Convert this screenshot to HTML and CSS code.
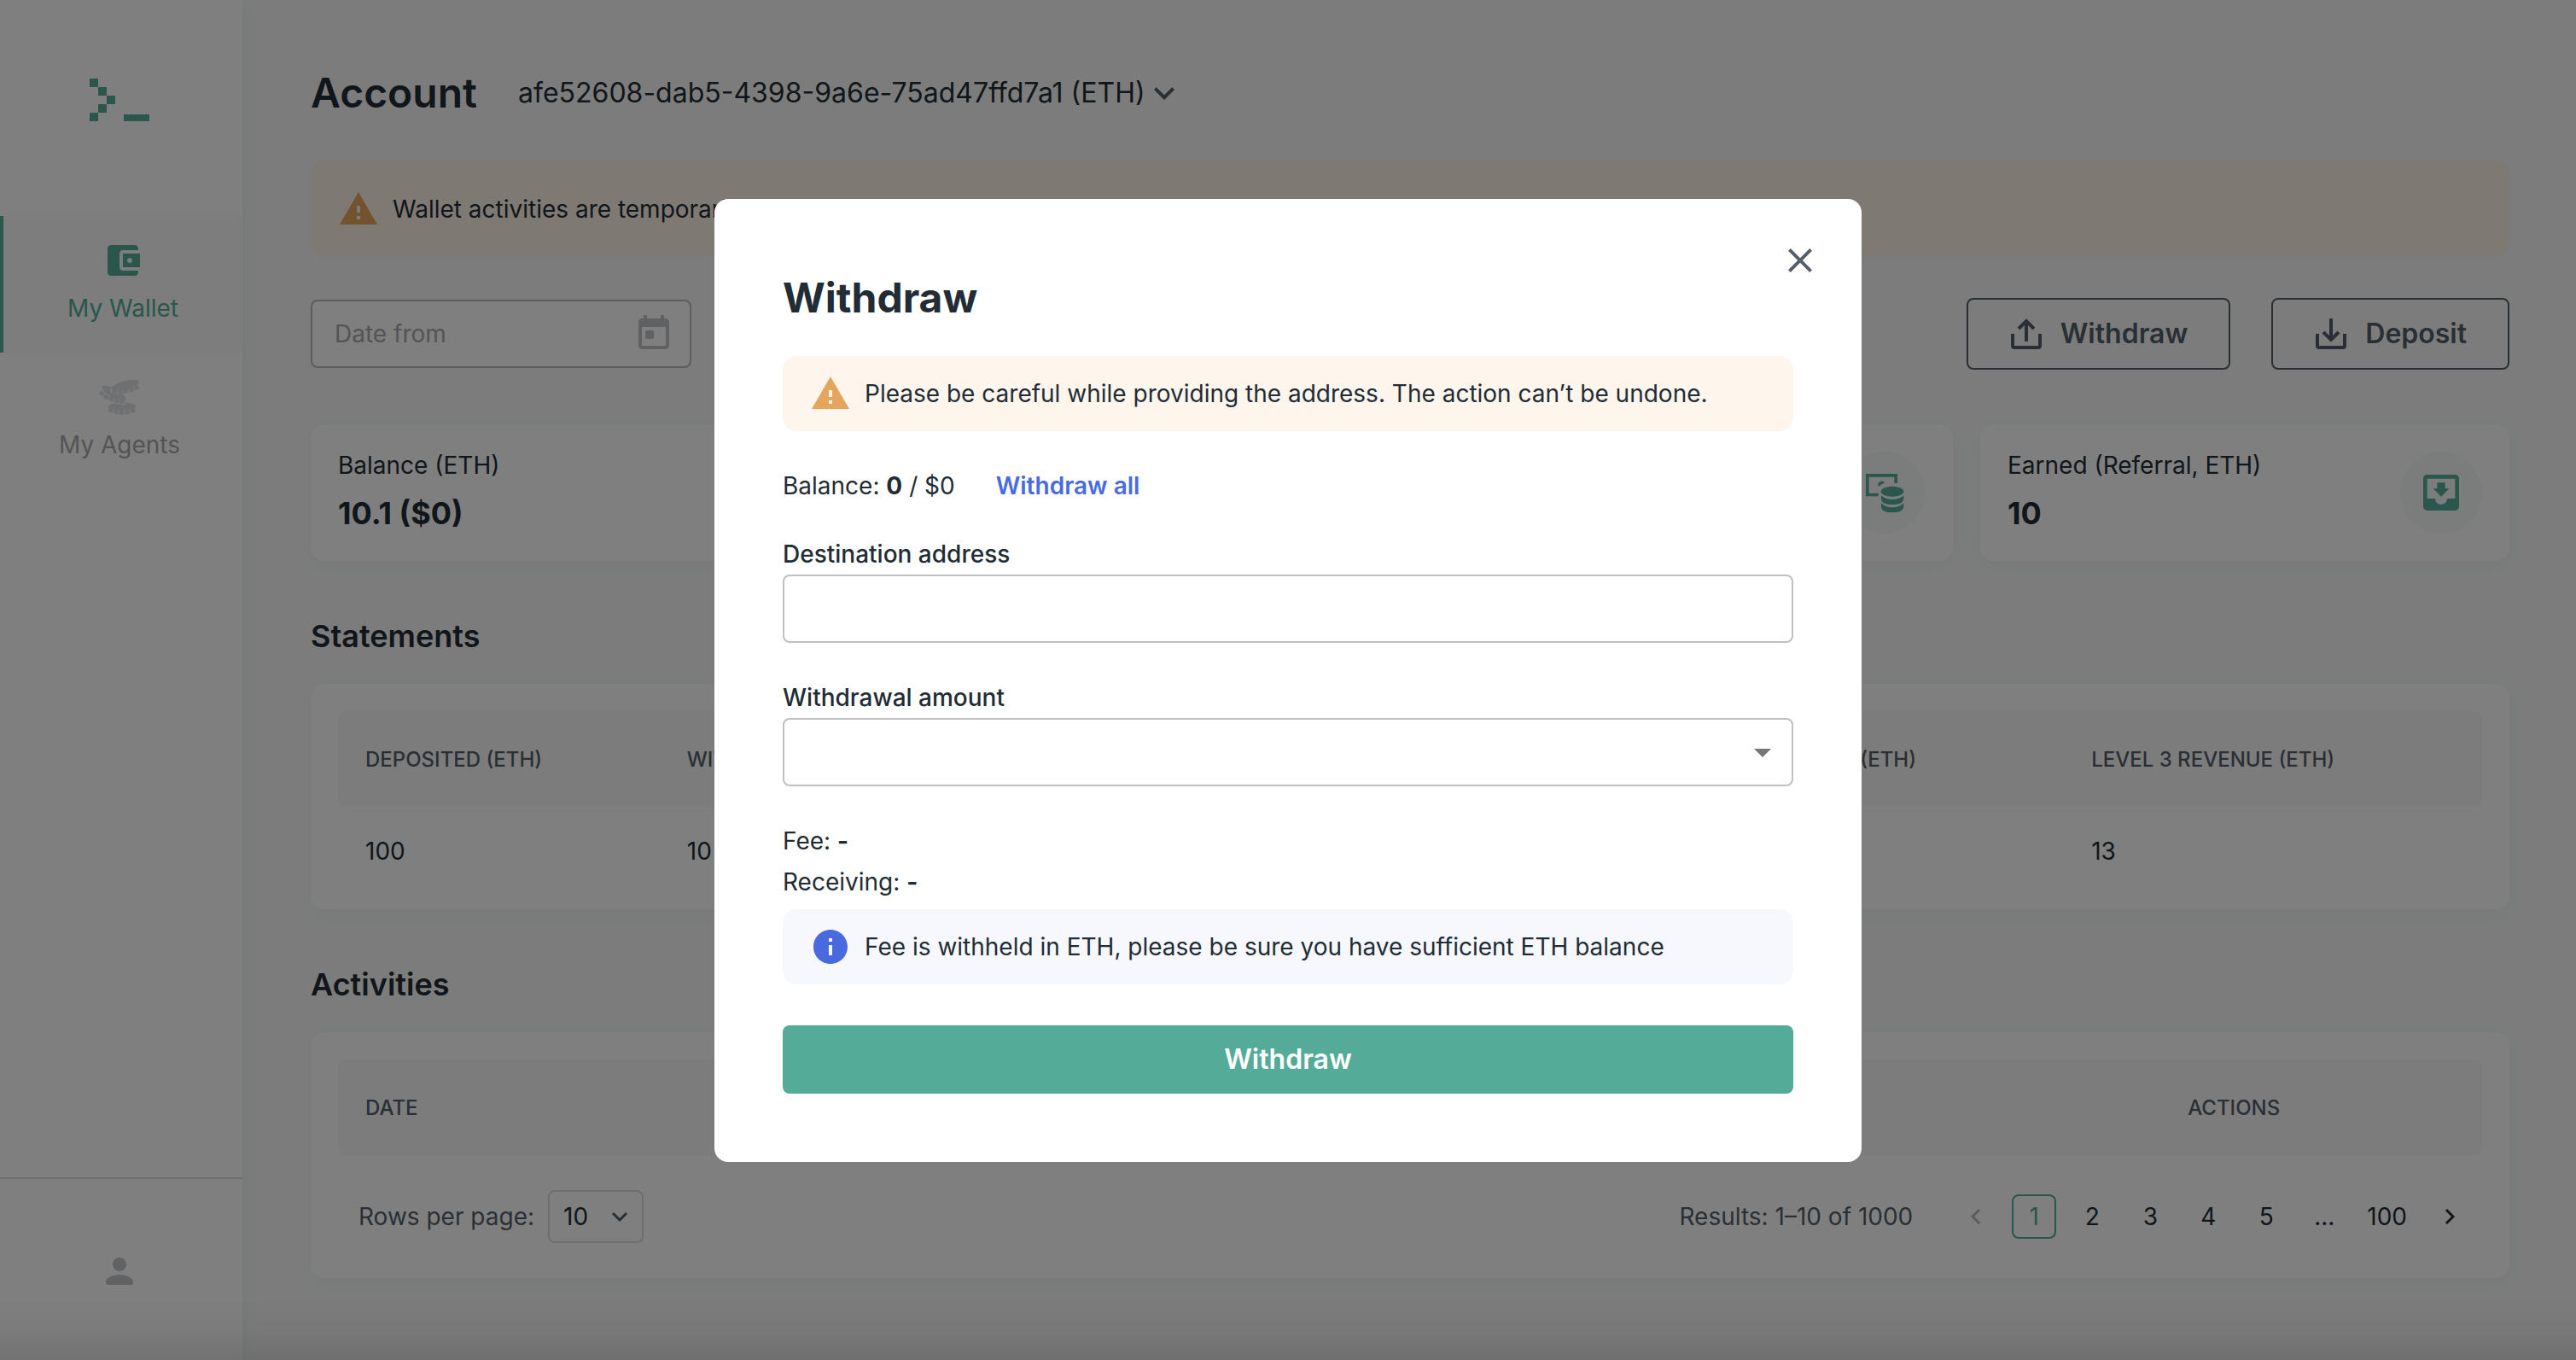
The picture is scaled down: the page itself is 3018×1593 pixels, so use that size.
FILE: index.html
```html
<!DOCTYPE html>
<html lang="en">
<head>
<meta charset="utf-8">
<meta name="viewport" content="width=device-width, initial-scale=1">
<title>Account – Withdraw</title>
<link rel="stylesheet" href="styles.css">
</head>
<body>
<div class="app">
  <aside class="sidebar">
    <a class="logo" href="#" aria-label="Home">
      <svg viewBox="0 0 70 50" width="70" height="50" fill="currentColor" shape-rendering="crispEdges"><path d="M0 0h10v10H0zM10 10h10v10H10zM20 20h10v10H20zM10 30h10v10H10zM0 40h10v10H0zM40 42h30v8H40z"/></svg>
    </a>
    <nav class="nav">
      <a class="nav-item nav-item-active" href="#">
        <svg class="icon" viewBox="0 0 24 24"><path d="M21 18v1c0 1.1-.9 2-2 2H5c-1.11 0-2-.9-2-2V5c0-1.1.89-2 2-2h14c1.1 0 2 .9 2 2v1h-9c-1.11 0-2 .9-2 2v8c0 1.1.89 2 2 2h9zm-9-2h10V8H12v8zm4-2.5c-.83 0-1.5-.67-1.5-1.5s.67-1.5 1.5-1.5 1.5.67 1.5 1.5-.67 1.5-1.5 1.5z"/></svg>
        <span>My Wallet</span>
      </a>
      <a class="nav-item" href="#">
        <svg class="icon coins" viewBox="78 33 144 144">
          <path class="coin-rim" d="M111 148Q159 172 208 148"/>
          <ellipse cx="159" cy="138" rx="49" ry="14"/>
          <path class="coin-halo" d="M83 84Q110 118 170 124"/>
          <path class="coin-rim" d="M82 86Q106 118 166 122"/>
          <ellipse cx="130" cy="92" rx="48" ry="16" transform="rotate(30 130 92)"/>
          <ellipse class="coin-halo" cx="171" cy="70" rx="52" ry="18" transform="rotate(-15 171 70)"/>
          <path class="coin-rim" d="M124 87Q180 92 220 67"/>
          <ellipse cx="170" cy="64" rx="50" ry="15" transform="rotate(-15 170 64)"/>
        </svg>
        <span>My Agents</span>
      </a>
    </nav>
    <a class="profile" href="#" aria-label="Profile">
      <svg class="icon" viewBox="0 0 24 24"><path d="M12 12c2.21 0 4-1.79 4-4s-1.79-4-4-4-4 1.79-4 4 1.79 4 4 4zm0 2c-2.67 0-8 1.34-8 4v1c0 .6.4 1 1 1h14c.6 0 1-.4 1-1v-1c0-2.66-5.33-4-8-4z"/></svg>
    </a>
  </aside>

  <main class="main">
    <header class="page-head">
      <h1>Account</h1>
      <div class="picker account-picker">
        <select aria-label="Account"><option>afe52608-dab5-4398-9a6e-75ad47ffd7a1 (ETH)</option></select>
        <svg class="icon" viewBox="0 0 24 24"><path d="M7.41 8.59 12 13.17l4.59-4.58L18 10l-6 6-6-6z"/></svg>
      </div>
    </header>

    <div class="alert alert-warning alert-page">
      <svg class="icon" viewBox="0 0 24 24"><path d="M1 21h22L12 2 1 21zm12-3h-2v-2h2v2zm0-4h-2v-4h2v4z"/></svg>
      <span>Wallet activities are temporarily suspended</span>
    </div>

    <div class="toolbar">
      <div class="date-field">
        <input type="text" placeholder="Date from" aria-label="Date from">
        <svg class="icon" viewBox="0 0 24 24"><path d="M19 3h-1V1.500c0-.3-.2-.5-.5-.5h-1c-.3 0-.5.2-.5.5V3H8V1.500C8 1.200 7.800 1 7.500 1h-1c-.3 0-.5.2-.5.5V3H5c-1.110 0-2 .9-2 2v14c0 1.100.89 2 2 2h14c1.100 0 2-.9 2-2V5c0-1.100-.9-2-2-2zm0 16H5V8h14v11zM8 10h3c.6 0 1 .4 1 1v3c0 .6-.4 1-1 1H8c-.6 0-1-.4-1-1v-3c0-.6.4-1 1-1z"/></svg>
      </div>
      <div class="toolbar-actions">
        <button class="btn-outline" type="button">
          <svg viewBox="0 0 40 40" width="40" height="40"><path d="M4 20v14q0 2 2 2h28q2 0 2-2V20M20 29V5M11 14l9-9 9 9"/></svg>
          Withdraw
        </button>
        <button class="btn-outline" type="button">
          <svg viewBox="0 0 40 40" width="40" height="40"><path d="M4 20v14q0 2 2 2h28q2 0 2-2V20M20 2v24M11 18l9 9 9-9"/></svg>
          Deposit
        </button>
      </div>
    </div>

    <section class="stats" aria-label="Totals">
      <article class="card stat">
        <div><p class="stat-label">Balance (ETH)</p><p class="stat-value">10.1 ($0)</p></div>
      </article>
      <article class="card stat"></article>
      <article class="card stat stat-end">
        <span class="stat-icon">
          <svg viewBox="12 69 144 144" width="48" height="48" fill="currentColor"><path d="M18 75h111v33h-11V86H29v57h33v11H18zM63 120a12 12 0 0 1 21-13q-14 4-21 13z"/><ellipse cx="111" cy="137" rx="40" ry="18"/><path d="M72 151q12 14 39 14t40-14v13q-4 19-40 19t-39-19zM72 178q12 15 39 15t40-15v14q-4 19-40 19t-39-19z"/></svg>
        </span>
      </article>
      <article class="card stat">
        <div><p class="stat-label">Earned (Referral, ETH)</p><p class="stat-value">10</p></div>
        <span class="stat-icon">
          <svg viewBox="0 0 24 24" width="56" height="56" fill="currentColor"><path d="M19 3H4.990c-1.110 0-1.980.9-1.980 2L3 19c0 1.100.88 2 1.990 2H19c1.100 0 2-.9 2-2V5c0-1.100-.9-2-2-2zm0 12h-4c0 1.660-1.350 3-3 3s-3-1.340-3-3H4.990V5H19v10zm-3-5h-2V7h-4v3H8l4 4 4-4z"/></svg>
        </span>
      </article>
    </section>

    <section class="block">
      <h2>Statements</h2>
      <div class="card table-card">
        <table>
          <colgroup><col class="col-s"><col class="col-s"><col><col class="col-l"><col class="col-l"><col class="col-l"></colgroup>
          <thead><tr><th scope="col">Deposited (ETH)</th><th scope="col">Withdrawn (ETH)</th><th scope="col">Earned (ETH)</th><th scope="col">Level 1 revenue (ETH)</th><th scope="col">Level 2 revenue (ETH)</th><th scope="col">Level 3 revenue (ETH)</th></tr></thead>
          <tbody><tr><td>100</td><td>10</td><td>10</td><td>11</td><td>12</td><td>13</td></tr></tbody>
        </table>
      </div>
    </section>

    <section class="block">
      <h2>Activities</h2>
      <div class="card table-card table-card-paged">
        <table>
          <colgroup><col class="col-l"><col class="col-l"><col><col class="col-s"></colgroup>
          <thead><tr><th scope="col">Date</th><th scope="col">Type</th><th scope="col">Amount</th><th scope="col">Actions</th></tr></thead>
        </table>
        <footer class="pager">
          <label for="rows">Rows per page:</label>
          <div class="picker rows-picker">
            <select id="rows"><option>10</option></select>
            <svg viewBox="0 0 20 12" width="20" height="12"><path d="M2 2l8 8 8-8"/></svg>
          </div>
          <span class="results">Results: 1–10 of 1000</span>
          <nav class="pages" aria-label="Pagination">
            <button class="page" type="button" aria-label="Previous page" disabled><svg viewBox="0 0 12 18" width="12" height="18"><path d="M10 1L2 9l8 8"/></svg></button>
            <button class="page page-current" type="button" aria-current="page">1</button>
            <button class="page" type="button">2</button>
            <button class="page" type="button">3</button>
            <button class="page" type="button">4</button>
            <button class="page" type="button">5</button>
            <span class="page">...</span>
            <button class="page" type="button">100</button>
            <button class="page" type="button" aria-label="Next page"><svg viewBox="0 0 12 18" width="12" height="18"><path d="M2 1l8 8-8 8"/></svg></button>
          </nav>
        </footer>
      </div>
    </section>
  </main>
</div>

<div class="backdrop">
  <form class="modal" role="dialog" aria-modal="true" aria-labelledby="dialog-title">
    <button class="modal-close" type="button" aria-label="Close">
      <svg class="icon" viewBox="0 0 24 24"><path d="M19 6.410 17.590 5 12 10.590 6.410 5 5 6.410 10.590 12 5 17.590 6.410 19 12 13.410 17.590 19 19 17.590 13.410 12z"/></svg>
    </button>
    <h2 id="dialog-title">Withdraw</h2>
    <div class="alert alert-warning">
      <svg class="icon" viewBox="0 0 24 24"><path d="M1 21h22L12 2 1 21zm12-3h-2v-2h2v2zm0-4h-2v-4h2v4z"/></svg>
      <span>Please be careful while providing the address. The action can’t be undone.</span>
    </div>
    <div class="balance">
      <span>Balance: <b>0</b> / $0</span>
      <button class="link" type="button">Withdraw all</button>
    </div>
    <div class="field">
      <label for="address">Destination address</label>
      <input id="address" type="text">
    </div>
    <div class="field">
      <label for="amount">Withdrawal amount</label>
      <div class="picker">
        <select id="amount"><option></option></select>
        <svg class="icon" viewBox="0 0 24 24"><path d="m7 10 5 5 5-5z"/></svg>
      </div>
    </div>
    <div class="summary">
      <p>Fee: <b>-</b></p>
      <p>Receiving: <b>-</b></p>
    </div>
    <div class="alert alert-info">
      <svg class="icon" viewBox="0 0 24 24"><path d="M12 2C6.480 2 2 6.480 2 12s4.480 10 10 10 10-4.480 10-10S17.520 2 12 2zm1 15h-2v-6h2v6zm0-8h-2V7h2v2z"/></svg>
      <span>Fee is withheld in ETH, please be sure you have sufficient ETH balance</span>
    </div>
    <button class="btn-primary" type="submit">Withdraw</button>
  </form>
</div>
</body>
</html>
```
FILE: styles.css
```css
:root {
  --green: #54ac98;
  --ink: #222c35;
  --muted: #555f6a;
  --page: #f8f9f9;
  --line: #c0c0c0;
}

* { box-sizing: border-box; }

body {
  margin: 0;
  font: 400 28px/40px Inter, "Liberation Sans", sans-serif;
  color: var(--ink);
  background: var(--page);
}

h1, h2, p { margin: 0; }

button, input, select { font: inherit; color: inherit; margin: 0; }
button { border: 0; padding: 0; background: none; cursor: pointer; }

.icon { width: 48px; height: 48px; fill: currentColor; flex: none; display: block; }

/* Shell */
.app { display: flex; min-height: 100vh; }

.sidebar {
  flex: none;
  width: 284px;
  display: flex;
  flex-direction: column;
  background: #fff;
  box-shadow: 4px 0 24px rgba(0, 0, 0, .04);
}

.logo { padding: 92px 4px 111px 0; color: var(--green); display: flex; justify-content: center; }

.nav-item {
  display: flex;
  flex-direction: column;
  align-items: center;
  gap: 12px;
  padding: 28px 4px 32px 0;
  color: #a9a9a9;
  text-decoration: none;
}

.nav-item-active {
  padding-right: 0;
  border-left: 4px solid var(--green);
  background: #fafbfb;
  color: var(--green);
}

.coins { fill: #dfe1e2; }
.coin-rim { fill: none; stroke: #dfe1e2; stroke-width: 14; stroke-dasharray: 17 3; }
.coin-halo { fill: #fff; stroke: #fff; stroke-width: 20; }
path.coin-halo { fill: none; }
ellipse.coin-halo { stroke-width: 6; }

.profile {
  margin-top: auto;
  padding: 84px 4px 80px 0;
  border-top: 2px solid #dcdcdc;
  display: flex;
  justify-content: center;
  color: #c2c5c9;
}

.main { flex: 1; min-width: 0; padding: 73px 78px 80px 80px; }

.page-head { display: flex; align-items: center; gap: 48px; margin-bottom: 43px; }
h1 { font-size: 48px; line-height: 72px; font-weight: 600; }

/* Select with an icon laid over its right end */
.picker { display: grid; align-items: center; }
.picker > * { grid-area: 1 / 1; }
.picker > svg { justify-self: end; pointer-events: none; }
.picker select { appearance: none; background: none; border: 0; border-radius: 8px; padding: 0; }

.account-picker { font-size: 32px; line-height: 48px; }
.account-picker select { padding-right: 46px; }
.account-picker svg { color: var(--muted); }

/* Alerts */
.alert { display: flex; align-items: center; gap: 16px; padding: 20px 32px; border-radius: 16px; }
.alert-warning { background: #fef5ec; }
.alert-warning svg { color: #e6a55c; }
.alert-info { background: #f6f8fe; }
.alert-info svg { color: #496adf; }
.alert-page { padding: 33px 32px 32px; margin-bottom: 48px; background: #fef3e7; }

/* Toolbar */
.toolbar { display: flex; align-items: center; justify-content: space-between; margin-bottom: 64px; }

.date-field { display: grid; align-items: center; width: 446px; }
.date-field > * { grid-area: 1 / 1; }
.date-field svg { justify-self: end; margin-right: 20px; color: #bfc2c6; }
.date-field input {
  width: 100%;
  height: 80px;
  padding: 0 72px 0 26px;
  border: 2px solid #b8bbbb;
  border-radius: 8px;
  background: #fff;
}
.date-field input::placeholder { color: #a8a8a8; opacity: 1; }

.toolbar-actions { display: flex; gap: 48px; }
.btn-outline {
  display: flex;
  align-items: center;
  gap: 20px;
  height: 84px;
  padding: 0 48px;
  border: 2px solid var(--muted);
  border-radius: 8px;
  color: var(--muted);
  font-size: 32px;
  font-weight: 600;
}
.btn-outline svg { fill: none; stroke: currentColor; stroke-width: 4; }

/* Cards */
.card { background: #fff; border-radius: 16px; box-shadow: 0 4px 24px rgba(0, 0, 0, .04); }

.stats { display: grid; grid-template-columns: repeat(4, 1fr); gap: 32px; margin-bottom: 64px; }
.stat { display: flex; align-items: center; justify-content: space-between; padding: 28px 32px; }
.stat-end { justify-content: flex-end; }
.stat-value { margin-top: 8px; font-size: 36px; line-height: 56px; font-weight: 700; }
.stat-icon {
  display: flex;
  align-items: center;
  justify-content: center;
  width: 96px;
  height: 96px;
  border-radius: 50%;
  background: #f7f8f8;
  color: var(--green);
}

.block + .block { margin-top: 64px; }
.block h2 { margin-bottom: 32px; font-size: 36px; line-height: 48px; font-weight: 600; }

/* Tables */
.table-card { padding: 32px 32px 16px; }
.table-card-paged { padding-bottom: 0; }

table { width: 100%; table-layout: fixed; border-collapse: collapse; }
.col-s { width: 15%; }
.col-l { width: 19.5%; }
th, td { padding: 0 32px; text-align: left; white-space: nowrap; }
th {
  height: 112px;
  padding-top: 2px;
  background: #f8f9f9;
  color: var(--muted);
  font-size: 24px;
  font-weight: 500;
  text-transform: uppercase;
}
th:first-child { border-radius: 8px 0 0 8px; }
th:last-child { border-radius: 0 8px 8px 0; }
td { height: 104px; }

.pager { display: flex; align-items: center; min-height: 144px; padding: 0 12px 0 24px; color: var(--muted); }

.rows-picker { margin-left: 16px; width: 112px; color: var(--ink); }
.rows-picker select { width: 100%; height: 62px; padding: 0 16px; border: 2px solid #dcdcdc; }
.rows-picker svg { margin-right: 18px; fill: none; stroke: var(--muted); stroke-width: 3; }

.results { margin-left: auto; }
.pages { display: flex; gap: 16px; margin-left: 48px; color: var(--ink); }
.page {
  display: flex;
  align-items: center;
  justify-content: center;
  min-width: 52px;
  height: 52px;
  padding: 0 8px;
  border-radius: 8px;
}
.page svg { fill: none; stroke: currentColor; stroke-width: 3; }
.page:disabled { color: #b4b7ba; }
.page-current { border: 2px solid var(--green); color: var(--green); }

/* Dialog */
.backdrop {
  position: fixed;
  inset: 0;
  display: flex;
  align-items: center;
  justify-content: center;
  overflow: auto;
  background: linear-gradient(to top, rgba(0, 0, 0, .1), rgba(0, 0, 0, .03) 32px, transparent 72px), rgba(0, 0, 0, .5);
}

.modal {
  position: relative;
  width: 1344px;
  max-width: 100%;
  padding: 80px;
  border-radius: 16px;
  background: #fff;
  line-height: 48px;
}
.modal h2 { margin-bottom: 32px; font-size: 48px; line-height: 72px; font-weight: 700; }
.modal-close { position: absolute; top: 48px; right: 48px; color: var(--muted); }
.modal .alert { line-height: 48px; }

.balance { display: flex; gap: 48px; margin: 40px 0 32px; }
.link { color: #486ae2; font-weight: 600; }

.field { margin-bottom: 40px; }
.field label { display: block; font-weight: 500; }
.field input, .field select {
  display: block;
  width: 100%;
  height: 80px;
  padding: 0 26px;
  border: 2px solid var(--line);
  border-radius: 8px;
  background: #fff;
}
.field .picker svg { margin-right: 12px; color: #757575; }

.summary { margin-bottom: 8px; }

.btn-primary {
  display: block;
  width: 100%;
  height: 80px;
  margin-top: 48px;
  border-radius: 8px;
  background: var(--green);
  color: #fff;
  font-size: 32px;
  font-weight: 600;
}
```
